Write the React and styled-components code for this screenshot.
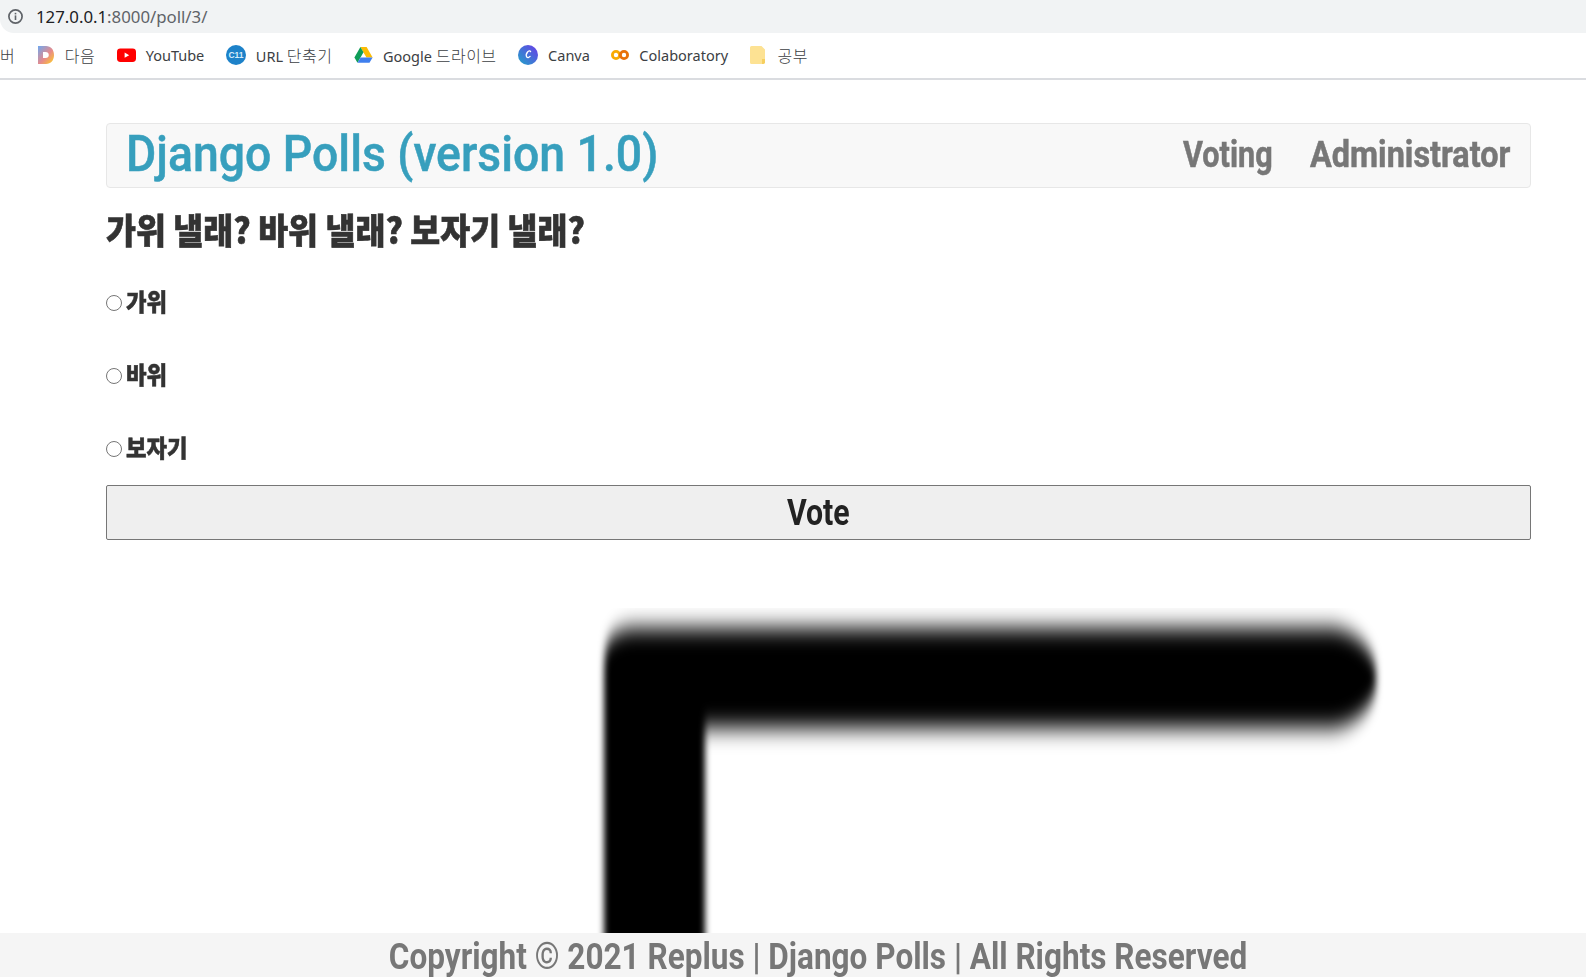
import React from 'react';
import styled, { createGlobalStyle } from 'styled-components';

const GlobalStyle = createGlobalStyle`
    html, body {
        margin: 0;
        padding: 0;
        background: #fff;
        font-family: "Liberation Sans", "Noto Sans CJK KR", sans-serif;
    }
`;

const choices = ['가위', '바위', '보자기'];

function InfoIcon() {
    return (
        <svg width="17" height="17" viewBox="0 0 17 17">
            <circle cx="8.5" cy="8.5" r="6.6" fill="none" stroke="#5f6368" strokeWidth="1.7" />
            <rect x="7.7" y="7.4" width="1.6" height="4.6" fill="#5f6368" />
            <rect x="7.7" y="4.8" width="1.6" height="1.6" fill="#5f6368" />
        </svg>
    );
}

function DaumIcon() {
    return (
        <svg width="18" height="20" viewBox="0 0 18 20">
            <defs>
                <linearGradient id="daum" x1="0" y1="0" x2="1" y2="1">
                    <stop offset="0" stopColor="#6ea8f0" />
                    <stop offset="0.55" stopColor="#e88a8a" />
                    <stop offset="1" stopColor="#ffd21f" />
                </linearGradient>
            </defs>
            <path fillRule="evenodd" fill="url(#daum)" d="M1 1h8c5 0 8 3.800 8 9s-3 9-8 9H1V1zm5 6v6h2.600c2 0 3.200-1.200 3.200-3s-1.200-3-3.200-3H6z" />
        </svg>
    );
}

function YoutubeIcon() {
    return (
        <svg width="19" height="18" viewBox="0 0 19 18">
            <rect x="0" y="2.500" width="19" height="13.500" rx="3.400" fill="#f00" />
            <path d="M7.600 6.600L12.200 9.200l-4.600 2.600z" fill="#fff" />
        </svg>
    );
}

function ShortenerIcon() {
    return (
        <svg width="20" height="20" viewBox="0 0 20 20">
            <circle cx="10" cy="10" r="10" fill="#1d82c9" />
            <text x="10" y="13" textAnchor="middle" fontSize="8.500" fontWeight="700" fontFamily="Liberation Sans" fill="#d7ecfa">C11</text>
        </svg>
    );
}

function DriveIcon() {
    return (
        <svg width="19" height="18" viewBox="0 0 19 18">
            <path d="M6.400 1h6.200l6 10.400h-6.200z" fill="#fbbc04" />
            <path d="M6.400 1L.4 11.400l3.100 5.300 6-10.400z" fill="#0f9d58" />
            <path d="M3.500 16.700h12l3.100-5.300H6.600z" fill="#3f7fee" />
        </svg>
    );
}

function CanvaIcon() {
    return (
        <svg width="20" height="20" viewBox="0 0 20 20">
            <defs>
                <linearGradient id="canva" x1="0" y1="1" x2="1" y2="0">
                    <stop offset="0" stopColor="#20a4c8" />
                    <stop offset="1" stopColor="#6a3be8" />
                </linearGradient>
            </defs>
            <circle cx="10" cy="10" r="10" fill="url(#canva)" />
            <path d="M12.600 6.600c-.5-1-2-.8-3 .4-1.200 1.500-1.700 3.800-.8 5 .8 1 2.200.6 3.300-.6" fill="none" stroke="#fff" strokeWidth="1.300" strokeLinecap="round" />
        </svg>
    );
}

function ColabIcon() {
    return (
        <svg width="18" height="18" viewBox="0 0 18 18">
            <circle cx="5" cy="9" r="3.600" fill="none" stroke="#f9ab00" strokeWidth="2.800" />
            <circle cx="13" cy="9" r="3.600" fill="none" stroke="#e8710a" strokeWidth="2.800" />
        </svg>
    );
}

function FolderIcon() {
    return (
        <svg width="18" height="18" viewBox="0 0 18 18">
            <path d="M1.500 0h10l3.500 3.500v13a1.500 1.500 0 0 1-1.500 1.500h-12A1.500 1.500 0 0 1 0 16.500v-15A1.500 1.500 0 0 1 1.500 0z" fill="#fde293" />
            <path d="M12 13h3v3.500l-1.500 1.500H12z" fill="#f6cf5f" />
        </svg>
    );
}

function BigStroke() {
    return (
        <StrokeSvg width="800" height="340" viewBox="0 0 800 340">
            <defs>
                <filter id="smear" x="-5%" y="-20%" width="110%" height="140%">
                    <feGaussianBlur stdDeviation="3 11" />
                </filter>
            </defs>
            <path
                filter="url(#smear)"
                fill="#000"
                d="M12 420V54Q12 20 46 20H735C761 20 785 42 785 70C785 98 761 120 735 120H113V420Z"
            />
        </StrokeSvg>
    );
}

function App() {
    return (
        <Page>
            <GlobalStyle />
            <AddressBar>
                <InfoIcon />
                <Url>127.0.0.1<UrlRest>:8000/poll/3/</UrlRest></Url>
            </AddressBar>
            <Bookmarks>
                <BookmarkText><Hangul>버</Hangul></BookmarkText>
                <Bookmark><DaumIcon /><BookmarkText><Hangul>다음</Hangul></BookmarkText></Bookmark>
                <Bookmark><YoutubeIcon /><BookmarkText>YouTube</BookmarkText></Bookmark>
                <Bookmark><ShortenerIcon /><BookmarkText>URL <Hangul>단축기</Hangul></BookmarkText></Bookmark>
                <Bookmark><DriveIcon /><BookmarkText>Google <Hangul>드라이브</Hangul></BookmarkText></Bookmark>
                <Bookmark><CanvaIcon /><BookmarkText>Canva</BookmarkText></Bookmark>
                <Bookmark><ColabIcon /><BookmarkText>Colaboratory</BookmarkText></Bookmark>
                <Bookmark><FolderIcon /><BookmarkText><Hangul>공부</Hangul></BookmarkText></Bookmark>
            </Bookmarks>
            <Content>
                <Navbar>
                    <Brand>Django Polls (version 1.0)</Brand>
                    <NavLinks>
                        <NavLink href="#" $width={89} $stretch={0.85}>Voting</NavLink>
                        <NavLink href="#" $width={199} $stretch={0.9}>Administrator</NavLink>
                    </NavLinks>
                </Navbar>
                <Question>가위 낼래? 바위 낼래? 보자기 낼래?</Question>
                <Choices>
                    {choices.map(choice => (
                        <Choice key={choice}>
                            <Radio type="radio" name="choice" />
                            <ChoiceLabel>{choice}</ChoiceLabel>
                        </Choice>
                    ))}
                </Choices>
                <VoteButton type="button"><VoteLabel>Vote</VoteLabel></VoteButton>
                <BigStroke />
            </Content>
            <Footer><FooterText>Copyright © 2021 Replus | Django Polls | All Rights Reserved</FooterText></Footer>
        </Page>
    );
}

export default App;

const display = `Roboto, "Noto Sans CJK KR", sans-serif`;

const Page = styled.div`
    position: relative;
    width: 1586px;
    height: 977px;
    overflow: hidden;
    background: #fff;
`;

const AddressBar = styled.div`
    display: flex;
    align-items: center;
    gap: 12px;
    height: 33px;
    padding-left: 7px;
    background: #f1f3f4;
    border-bottom-left-radius: 14px;
`;

const Url = styled.span`
    font-family: "Noto Sans", sans-serif;
    font-size: 16.8px;
    color: #202124;
`;

const UrlRest = styled.span`
    color: #5f6368;
`;

const Bookmarks = styled.div`
    display: flex;
    align-items: center;
    gap: 21.5px;
    height: 43px;
    padding: 0 0 2px 0;
    border-bottom: 2px solid #dadce0;
`;

const Bookmark = styled.div`
    display: flex;
    align-items: center;
    gap: 10px;
`;

const BookmarkText = styled.span`
    font-family: "Noto Sans", "Noto Sans CJK KR", sans-serif;
    font-size: 14.5px;
    color: #3c4043;
`;

const Hangul = styled.span`
    font-size: 16px;
    font-weight: 300;
    letter-spacing: .5px;
`;

const Content = styled.main`
    display: flex;
    flex-direction: column;
    width: 1425px;
    margin-left: 106px;
    padding-top: 43px;
`;

const Navbar = styled.nav`
    display: flex;
    align-items: center;
    justify-content: space-between;
    box-sizing: border-box;
    height: 65px;
    padding: 0 21px 0 19px;
    background: #f8f8f8;
    border: 1px solid #e7e7e7;
    border-radius: 4px;
`;

const Brand = styled.a`
    font-family: ${display};
    font-size: 50px;
    font-weight: 500;
    line-height: 58px;
    margin-bottom: 4px;
    color: #379fbd;
    -webkit-text-stroke: .5px #379fbd;
    white-space: nowrap;
    transform: scaleX(.927);
    transform-origin: left center;
`;

const NavLinks = styled.div`
    display: flex;
    gap: 38px;
    margin-bottom: 2px;
`;

const NavLink = styled.a`
    display: block;
    width: ${props => props.$width}px;
    font-family: ${display};
    font-size: 36px;
    font-weight: 700;
    color: #777;
    -webkit-text-stroke: .5px #777;
    text-decoration: none;
    white-space: nowrap;
    transform: scaleX(${props => props.$stretch});
    transform-origin: left center;
`;

const Question = styled.h2`
    margin: 16px 0 0;
    height: 49px;
    line-height: 49px;
    font-family: "Noto Sans CJK KR", sans-serif;
    font-size: 35px;
    font-weight: 900;
    color: #333;
    -webkit-text-stroke: .6px #333;
    white-space: nowrap;
    transform: scaleX(.93);
    transform-origin: left center;
`;

const Choices = styled.div`
    display: flex;
    flex-direction: column;
    gap: 47px;
    margin-top: 36px;
`;

const Choice = styled.label`
    display: flex;
    align-items: center;
    gap: 4px;
    height: 26px;
`;

const Radio = styled.input`
    width: 16px;
    height: 16px;
    margin: 2px 0 0;
`;

const ChoiceLabel = styled.span`
    font-family: "Noto Sans CJK KR", sans-serif;
    font-size: 24px;
    font-weight: 900;
    line-height: 26px;
    margin-bottom: 2px;
    color: #333;
    -webkit-text-stroke: .5px #333;
    transform: scaleX(.93);
    transform-origin: left center;
`;

const VoteButton = styled.button`
    height: 55px;
    margin-top: 24px;
    padding: 0;
    background: #efefef;
    border: 1px solid #767676;
    border-radius: 2px;
`;

const VoteLabel = styled.span`
    display: inline-block;
    font-family: ${display};
    font-size: 36px;
    font-weight: 700;
    color: #222;
    transform: scaleX(.84);
`;

const StrokeSvg = styled.svg`
    display: block;
    flex: none;
    margin: 68px 0 0 486px;
`;

const Footer = styled.footer`
    position: absolute;
    left: 0;
    right: 0;
    bottom: 0;
    height: 44px;
    padding-left: 50px;
    line-height: 48px;
    text-align: center;
    background: #f5f5f5;
    white-space: nowrap;
`;

const FooterText = styled.span`
    display: inline-block;
    font-family: ${display};
    font-size: 36px;
    font-weight: 700;
    color: #777;
    transform: scaleX(.876);
`;
